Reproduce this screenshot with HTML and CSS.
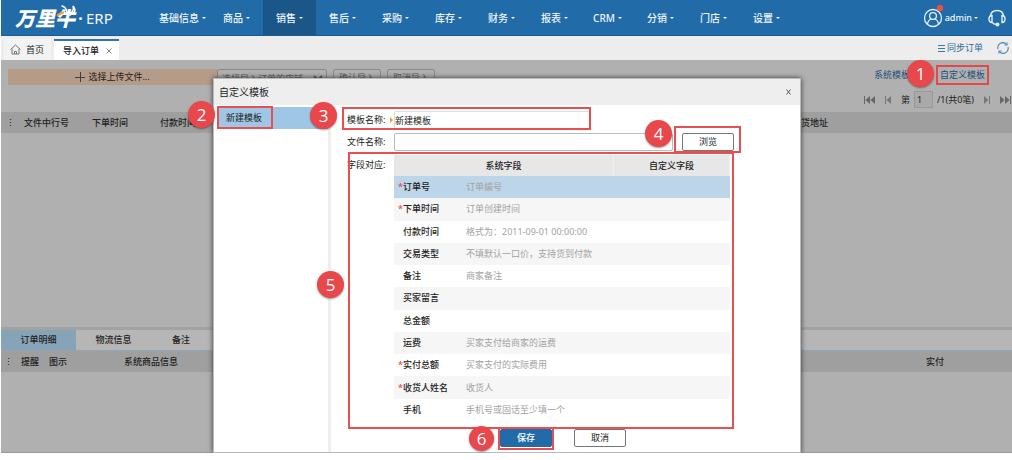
FILE: index.html
```html
<!DOCTYPE html>
<html lang="zh-CN">
<head>
<meta charset="utf-8">
<title>万里牛 ERP - 导入订单</title>
<link rel="stylesheet" href="styles.css">
</head>
<body>
<div class="app">
  <header class="topbar">
    <div class="brand">
      <span class="brand-name">万里牛</span>
      <svg class="brand-horn" width="62" height="24" viewBox="0 0 62 24" fill="none" stroke-linecap="round"><path d="M52 10Q60 9 58 2Q63 8 55 11" stroke="#fff" stroke-width="1.500"/><path d="M47 2Q51 3 52 8" stroke="#fff" stroke-width="1.500"/><path d="M43 11L48 8.500" stroke="#f0a04b" stroke-width="2.500"/></svg>
      <span class="brand-dot">·</span><span class="brand-erp">ERP</span>
    </div>
    <nav class="menu">
      <a href="#">基础信息<i class="caret"></i></a>
      <a href="#">商品<i class="caret"></i></a>
      <a href="#" class="active">销售<i class="caret"></i></a>
      <a href="#">售后<i class="caret"></i></a>
      <a href="#">采购<i class="caret"></i></a>
      <a href="#">库存<i class="caret"></i></a>
      <a href="#">财务<i class="caret"></i></a>
      <a href="#">报表<i class="caret"></i></a>
      <a href="#">CRM<i class="caret"></i></a>
      <a href="#">分销<i class="caret"></i></a>
      <a href="#">门店<i class="caret"></i></a>
      <a href="#">设置<i class="caret"></i></a>
    </nav>
    <div class="account">
      <a href="#" class="user">
        <svg width="20" height="24" viewBox="0 0 20 24" fill="none" stroke="#e6f0f8" stroke-width="1.3"><circle cx="10" cy="14" r="8.5"/><circle cx="10" cy="12" r="3.4"/><path d="M4.500 20Q5 16 8.500 15M15.500 20Q15 16 11.500 15"/><circle cx="17" cy="4" r="3.200" fill="#ee4f3c" stroke="none"/></svg>
        admin<i class="caret"></i></a>
      <button class="icon-btn" aria-label="客服"><svg width="18" height="18" viewBox="0 0 18 18" fill="none" stroke="#e6f0f8" stroke-width="1.4"><path d="M2.500 7Q3 1.500 9 1.500Q15 1.500 15.500 7"/><path d="M4 6.500Q1 6.500 1 10Q1 13.500 4 13.500ZM14 6.500Q17 6.500 17 10Q17 13.500 14 13.500ZM4 13Q5 15 8 15.500"/><circle cx="9.500" cy="15.500" r="1.300" fill="#e6f0f8"/></svg></button>
    </div>
  </header>

  <div class="tabbar">
    <a href="#" class="tab home"><svg width="11" height="11" viewBox="0 0 11 11" fill="none" stroke="#777"><path d="M.5 5.500L5.500 1L10.500 5.500M2 4.500V10H9V4.500M4.500 10V7.500H6.500V10"/></svg>首页</a>
    <a href="#" class="tab current">导入订单<svg width="6" height="6" viewBox="0 0 6 6" stroke="#888"><path d="M.5 .5L5.500 5.500M5.500 .5L.5 5.500"/></svg></a>
    <div class="tab-tools">
      <a href="#" class="sync"><svg width="7" height="8" viewBox="0 0 7 8" stroke="#3a76a8"><path d="M0 1.500H7M0 4.500H7M0 7.500H7"/></svg>同步订单</a>
      <button class="icon-btn" aria-label="刷新"><svg width="12" height="12" viewBox="0 0 12 12" fill="none" stroke="#4a86b4" stroke-width="1.1"><path d="M1 7A5 5 0 0 1 9.500 2.300M11 5A5 5 0 0 1 2.500 9.700"/><path d="M10 .5V3H7.500M2 11.500V9H4.500"/></svg></button>
    </div>
  </div>

  <main class="content">
    <div class="toolbar">
      <div class="tools-left">
        <button class="upload"><svg width="10" height="10" viewBox="0 0 10 10" stroke="#3f3f3f"><path d="M5.500 0V10M0 5.500H10"/></svg>选择上传文件...</button>
        <select class="tpl-select" aria-label="导入模板"><option>选择导入订单的店铺</option></select>
        <button class="dim-btn">确认导入</button>
        <button class="dim-btn">取消导入</button>
      </div>
      <div class="tools-right">
        <div class="links"><a href="#">系统模板</a><a href="#" class="custom">自定义模板</a></div>
        <div class="pager">
          <button class="icon-btn" aria-label="首页"><svg width="11" height="8" viewBox="0 0 11 8" fill="#666"><path d="M0 0H1V8H0ZM6 0V8L1.500 4ZM11 0V8L6.500 4Z"/></svg></button>
          <button class="icon-btn" aria-label="上一页"><svg width="6" height="8" viewBox="0 0 6 8" fill="#777"><path d="M0 0H1V8H0ZM6 0V8L1.500 4Z"/></svg></button>
          <label class="page">第<input type="text" value="1"></label>
          <span>/1(共0笔)</span>
          <button class="icon-btn" aria-label="下一页"><svg width="6" height="8" viewBox="0 0 6 8" fill="#777"><path d="M5 0H6V8H5ZM0 0V8L4.500 4Z"/></svg></button>
          <button class="icon-btn" aria-label="末页"><svg width="11" height="8" viewBox="0 0 11 8" fill="#666"><path d="M10 0H11V8H10ZM0 0V8L4.500 4ZM5 0V8L9.500 4Z"/></svg></button>
        </div>
      </div>
    </div>
    <section class="orders">
      <table class="grid">
        <colgroup><col class="w-19"><col class="w-68"><col class="w-68"><col class="w-68"><col><col class="w-224"></colgroup>
        <thead><tr><th>⋮</th><th class="left">文件中行号</th><th class="left">下单时间</th><th class="left">付款时间</th><th></th><th class="left">收货地址</th></tr></thead>
      </table>
    </section>
    <section class="details">
      <div class="detail-tabs"><button class="active">订单明细</button><button>物流信息</button><button class="short">备注</button></div>
      <table class="grid">
        <colgroup><col class="w-15"><col class="w-28"><col class="w-28"><col class="w-158"><col><col class="w-154"></colgroup>
        <thead><tr><th>⋮</th><th>提醒</th><th>图示</th><th>系统商品信息</th><th></th><th>实付</th></tr></thead>
      </table>
    </section>
  </main>

  <span class="badge b1">1</span>

  <div class="dialog" role="dialog" aria-label="自定义模板">
    <div class="dialog-head"><h2>自定义模板</h2><button class="icon-btn" aria-label="关闭"><svg width="5" height="6" viewBox="0 0 5 6" stroke="#555"><path d="M.5 .5L4.500 5.500M4.500 .5L.5 5.500"/></svg></button></div>
    <div class="dialog-body">
      <aside class="templates"><a href="#">新建模板</a></aside>
      <form class="form">
        <div class="row"><label for="name">模板名称:</label><i class="edited"></i><input id="name" type="text" class="name" value="新建模板"></div>
        <div class="row"><label for="file">文件名称:</label><input id="file" type="text" class="file"><button type="button" class="btn browse">浏览</button></div>
        <div class="row fields-row"><span class="label">字段对应:</span>
          <table class="fields">
            <colgroup><col class="w-68"><col><col class="w-116"></colgroup>
            <thead><tr><th colspan="2">系统字段</th><th>自定义字段</th></tr></thead>
            <tbody>
              <tr class="selected"><td class="req">订单号</td><td>订单编号</td><td></td></tr>
              <tr><td class="req">下单时间</td><td>订单创建时间</td><td></td></tr>
              <tr><td>付款时间</td><td>格式为：2011-09-01 00:00:00</td><td></td></tr>
              <tr><td>交易类型</td><td>不填默认一口价，支持货到付款</td><td></td></tr>
              <tr><td>备注</td><td>商家备注</td><td></td></tr>
              <tr><td>买家留言</td><td></td><td></td></tr>
              <tr><td>总金额</td><td></td><td></td></tr>
              <tr><td>运费</td><td>买家支付给商家的运费</td><td></td></tr>
              <tr><td class="req">实付总额</td><td>买家支付的实际费用</td><td></td></tr>
              <tr><td class="req">收货人姓名</td><td>收货人</td><td></td></tr>
              <tr><td>手机</td><td>手机号或固话至少填一个</td><td></td></tr>
            </tbody>
          </table>
        </div>
        <div class="actions"><button type="button" class="btn save">保存</button><button type="button" class="btn">取消</button></div>
      </form>
    </div>
    <span class="mark m2"></span><span class="mark m3"></span><span class="mark m4"></span><span class="mark m5"></span><span class="mark m6"></span>
    <span class="badge b2">2</span><span class="badge b3">3</span><span class="badge b4">4</span><span class="badge b5">5</span><span class="badge b6">6</span>
  </div>
</div>
</body>
</html>
```

FILE: styles.css
```css
* { box-sizing: border-box; }
body { margin: 0; background: #fff; color: #222; font: 9px/12px "Noto Sans", "Noto Sans CJK SC", sans-serif; }
a { color: inherit; text-decoration: none; }
button, input, select { font: inherit; color: inherit; margin: 0; }
svg { display: block; flex: none; }
.icon-btn { display: flex; padding: 0; border: 0; background: none; }
.app { position: relative; display: flex; flex-direction: column; min-height: calc(100vh - 7px); margin-left: 1px; overflow: hidden; }

.topbar { display: flex; height: 36px; background: #206ba8; color: #f0f6fb; border-bottom: 1px solid #195b92; }
.brand { position: relative; display: flex; align-items: center; width: 154px; padding-left: 14px; }
.brand-name { width: 60px; font: italic 900 20px/24px "Noto Sans CJK SC", sans-serif; color: #fff; white-space: nowrap; }
.brand-horn { position: absolute; left: 14px; top: 4px; }
.brand-dot { width: 11px; text-align: center; font: 700 16px/20px "Noto Sans", sans-serif; }
.brand-erp { font-size: 15px; line-height: 20px; }
.menu { display: flex; flex: 1; font-size: 10px; font-weight: 500; }
.menu a { display: flex; align-items: center; justify-content: center; min-width: 53px; padding: 0 4px; gap: 3px; }
.menu .active { background: #1b5688; }
.caret { border: 2px solid transparent; border-top-color: currentColor; border-bottom: 0; }
.account { display: flex; align-items: center; gap: 10px; padding-right: 6px; }
.user { display: flex; align-items: center; gap: 2px; font-weight: 500; }
.user svg { margin-bottom: 4px; }

.tabbar { display: flex; align-items: flex-end; height: 24px; padding-left: 3px; gap: 3px; background: #ededed; }
.tab { display: flex; align-items: center; height: 21px; gap: 5px; padding: 0 7px; background: #f3f3f3; }
.tab.home { width: 47px; padding: 0 6px; }
.tab.current { width: 65px; gap: 7px; padding: 0 9px; background: #fff; border-top: 2px solid #2f74ab; font-weight: 500; white-space: nowrap; }
.tab-tools { display: flex; align-items: center; align-self: stretch; gap: 14px; margin-left: auto; padding-right: 3px; color: #2c6c9f; }
.sync { display: flex; align-items: center; gap: 2px; }

.content { display: flex; flex: 1; flex-direction: column; background: #b0b0b0; border-bottom: 1px solid #999; }
.toolbar { display: flex; justify-content: space-between; height: 52px; padding: 9px 1px 0 7px; }
.tools-left { display: flex; align-items: flex-start; }
.upload { display: flex; align-items: center; justify-content: center; gap: 3px; width: 209px; height: 16px; border: 0; background: #b59c88; }
.tpl-select { width: 110px; height: 18px; border: 1px solid #888; border-radius: 2px; background: #b0b0b0; color: #555; }
.dim-btn { width: 48px; height: 18px; margin-left: 6px; padding: 0; border: 1px solid #888; border-radius: 2px; background: #b0b0b0; color: #555; }
.tools-right { display: flex; flex-direction: column; align-items: flex-end; gap: 10px; }
.links { display: flex; gap: 30px; padding-right: 26px; color: #1f4e77; }
.custom { outline: 2px solid #e5474b; outline-offset: 2px; }
.pager { display: flex; align-items: center; gap: 10px; }
.page { display: flex; align-items: center; gap: 4px; margin-right: -6px; }
.page input { width: 19px; height: 17px; padding: 0 2px; border: 1px solid #999; background: #a9a9a9; }
.grid { width: 100%; border-collapse: collapse; table-layout: fixed; background: #9f9f9f; }
.grid th { height: 21px; padding: 0; font-weight: 500; text-align: center; white-space: nowrap; }
.grid .left { padding-left: 4px; text-align: left; }
.w-15 { width: 15px; }
.w-19 { width: 19px; }
.w-28 { width: 28px; }
.w-68 { width: 68px; }
.w-116 { width: 116px; }
.w-154 { width: 154px; }
.w-158 { width: 158px; }
.w-224 { width: 224px; }
.orders { flex: 1; }
.details { height: 125px; border-top: 3px solid #a2a2a2; }
.detail-tabs { display: flex; height: 21px; background: #b6b6b6; border-bottom: 1px solid #94a5b3; }
.detail-tabs button { width: 75px; padding: 0; border: 0; background: none; font-weight: 500; }
.detail-tabs .active { background: #87a3b7; }
.detail-tabs .short { width: 60px; }

.dialog { position: absolute; left: 212px; right: 211px; top: 78px; bottom: 0; display: flex; flex-direction: column; background: #fff; border: 1px solid #bbb; box-shadow: 0 0 5px #333; }
.dialog-head { display: flex; align-items: center; justify-content: space-between; height: 26px; padding: 0 9px 0 5px; background: #eee; }
.dialog-head h2 { margin: 0; font-size: 10px; font-weight: 400; }
.dialog-body { display: flex; flex: 1; }
.templates { width: 117px; padding: 2px 0 0 3px; border-right: 3px solid #eee; }
.templates a { display: block; padding: 5px 9px; background: #9fc6e4; }
.form { flex: 1; padding: 4px 62px 0 16px; }
.row { display: flex; align-items: center; height: 22px; }
.row label, .label { width: 43px; white-space: nowrap; }
.edited { width: 0; margin-right: 1px; border: 3px solid transparent; border-left: 3px solid #e9a23b; border-right: 0; }
.row input { height: 18px; min-width: 0; padding: 0; border: 1px solid #bbb; border-radius: 2px; }
.name { flex: 0 1 196px; }
.row .name { border-color: #ddd; }
.file { flex: 1; margin-left: 4px; }
.btn { width: 52px; height: 18px; padding: 0; border: 1px solid #777; border-radius: 2px; background: #fff; }
.browse { margin: 0 0 0 9px; }
.fields-row { align-items: flex-start; height: auto; padding: 2px 8px 0 0; }
.form .row:nth-child(2) { padding-right: 4px; }
.label { flex: none; margin: 4px 4px 0 0; }
.fields { flex: 1; height: 266px; border-collapse: collapse; table-layout: fixed; }
.fields th { height: 21px; padding: 0; background: #e7e7e7; font-weight: 500; border-right: 1px solid #f0f0f0; }
.fields td { padding: 0 0 0 4px; color: #a2a2a2; white-space: nowrap; }
.fields td:first-child { padding-left: 9px; color: #222; font-weight: 500; }
.fields td.req:first-child { padding-left: 4px; }
.req::before { content: "*"; color: #e5474b; }
.fields tbody tr:nth-child(even) { background: #fff; }
.fields tbody tr:nth-child(even) { background: #f6f6f6; }
.fields .selected { background: #bdd5e8; }
.actions { display: flex; gap: 22px; padding: 8px 0 0 153px; }
.save { border-color: #206ba8; background: #206ba8; color: #fff; font-weight: 500; }

.mark { position: absolute; border: 2px solid #e94e50; pointer-events: none; }
.m2 { left: 3px; top: 27px; width: 56px; height: 23px; }
.m3 { left: 128px; top: 28px; width: 249px; height: 23px; }
.m4 { right: 59px; top: 47px; width: 67px; height: 27px; }
.m5 { left: 134px; right: 66px; top: 73px; height: 277px; }
.m6 { left: 284px; top: 348px; width: 56px; height: 23px; }
.badge { position: absolute; width: 27px; height: 27px; border-radius: 50%; background: #e8474b; color: #fff; font: 17px/27px "Open Sans", sans-serif; text-align: center; box-shadow: 0 1px 2px #0006; }
.b1 { right: 78px; top: 60px; }
.b2 { left: -26px; top: 22px; }
.b3 { left: 96px; top: 23px; }
.b4 { right: 128px; top: 41px; }
.b5 { left: 103px; top: 192px; }
.b6 { left: 255px; top: 347px; width: 25px; height: 25px; line-height: 25px; }
```
